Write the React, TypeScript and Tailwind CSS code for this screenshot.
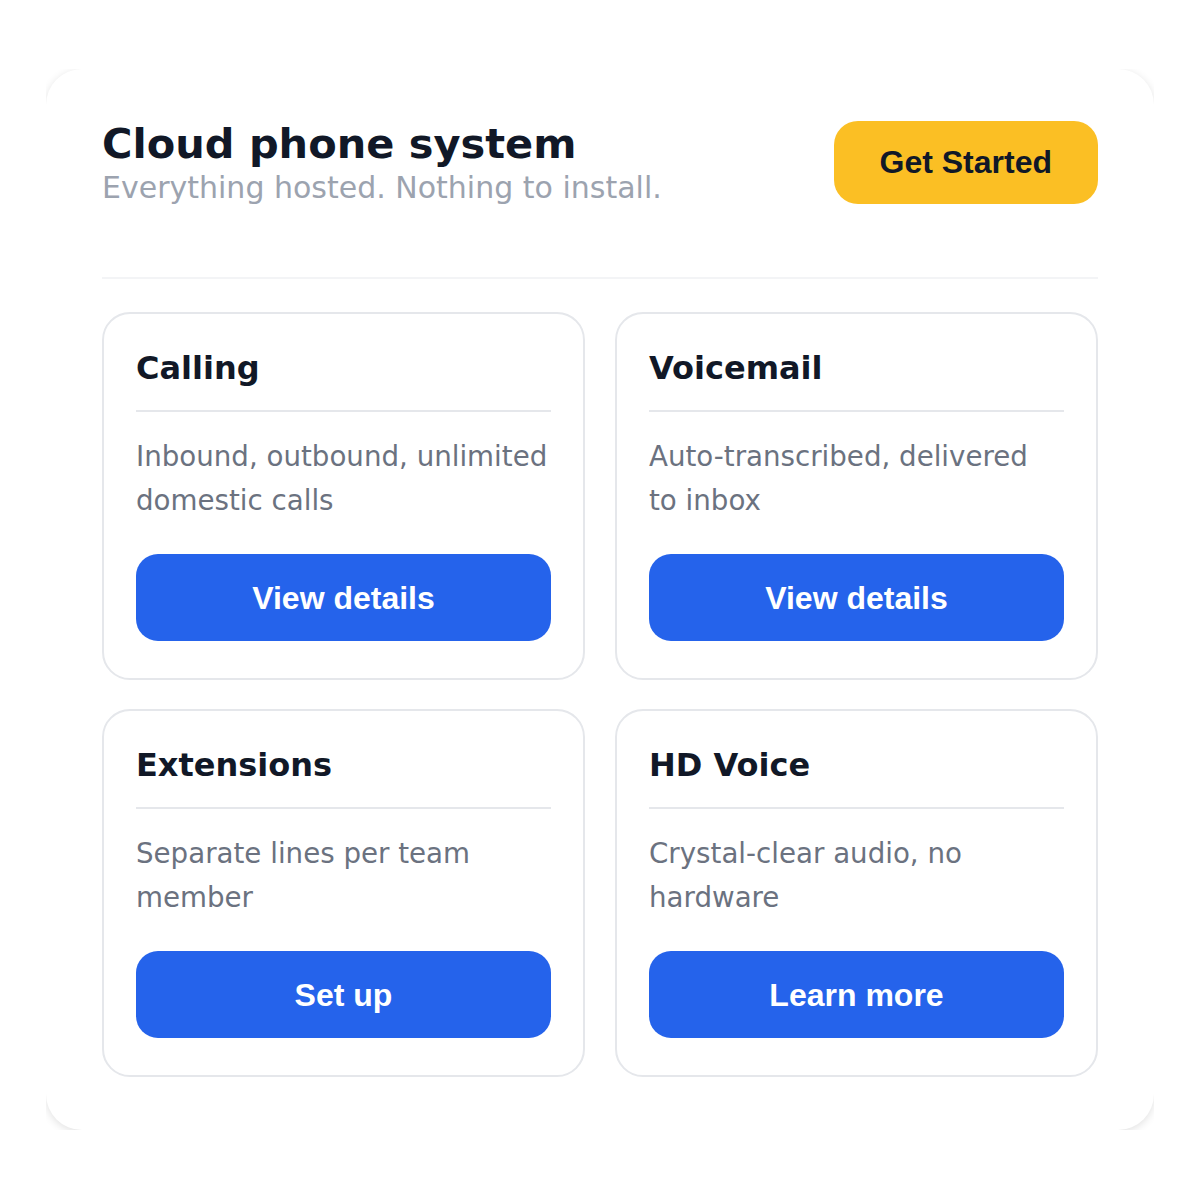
const features = [
  { title: "Calling", text: "Inbound, outbound, unlimited domestic calls", action: "View details" },
  { title: "Voicemail", text: "Auto-transcribed, delivered to inbox", action: "View details" },
  { title: "Extensions", text: "Separate lines per team member", action: "Set up" },
  { title: "HD Voice", text: "Crystal-clear audio, no hardware", action: "Learn more" },
]

function FeatureCard({ title, text, action }: { title: string; text: string; action: string }) {
  return (
    <div className="flex flex-col rounded-[28px] border-2 border-[#e5e7eb] bg-white px-[32px] pt-[35px] pb-[37px]">
      <h3 className="font-['DejaVu_Sans',sans-serif] text-[32px] leading-[38px] font-bold text-[#111827]">{title}</h3>
      <div className="mt-[23px] h-[2px] bg-[#e5e7eb]" />
      <p className="mt-[23px] pr-[3px] font-['DejaVu_Sans',sans-serif] text-[27.7px] leading-[44px] text-[#6b7280]">{text}</p>
      <button className="mt-[31px] h-[87px] rounded-[22px] bg-[#2563eb] font-['Liberation_Sans',Arial,sans-serif] text-[32px] font-bold text-white">
        {action}
      </button>
    </div>
  )
}

export default function App() {
  return (
    <div className="min-h-[1200px] bg-white pt-[69px] px-[46px]">
      {/* clip box keeps the shadow inside the panel's own rectangle */}
      <div className="overflow-hidden">
        <div className="rounded-[36px] bg-white px-[56px] pt-[50px] pb-[53px] shadow-[0_2px_8px_rgba(0,0,0,0.12)]">
          <div className="flex items-center justify-between border-b-2 border-[#f3f4f6] pb-[72px]">
            <div className="flex flex-col">
              <h1 className="font-['DejaVu_Sans',sans-serif] text-[41.5px] leading-[49px] font-bold text-[#111827]">
                Cloud phone system
              </h1>
              <p className="mt-[2px] font-['DejaVu_Sans',sans-serif] text-[30px] leading-[35px] text-[#9ca3af]">
                Everything hosted. Nothing to install.
              </p>
            </div>
            <button className="h-[83px] rounded-[24px] bg-[#fbbf24] px-[46px] font-['Liberation_Sans',Arial,sans-serif] text-[32px] font-bold text-[#111827]">
              Get Started
            </button>
          </div>

          <div className="mt-[33px] grid grid-cols-2 gap-[30px] gap-y-[29px]">
            {features.map((f) => (
              <FeatureCard key={f.title} {...f} />
            ))}
          </div>
        </div>
      </div>
    </div>
  )
}
